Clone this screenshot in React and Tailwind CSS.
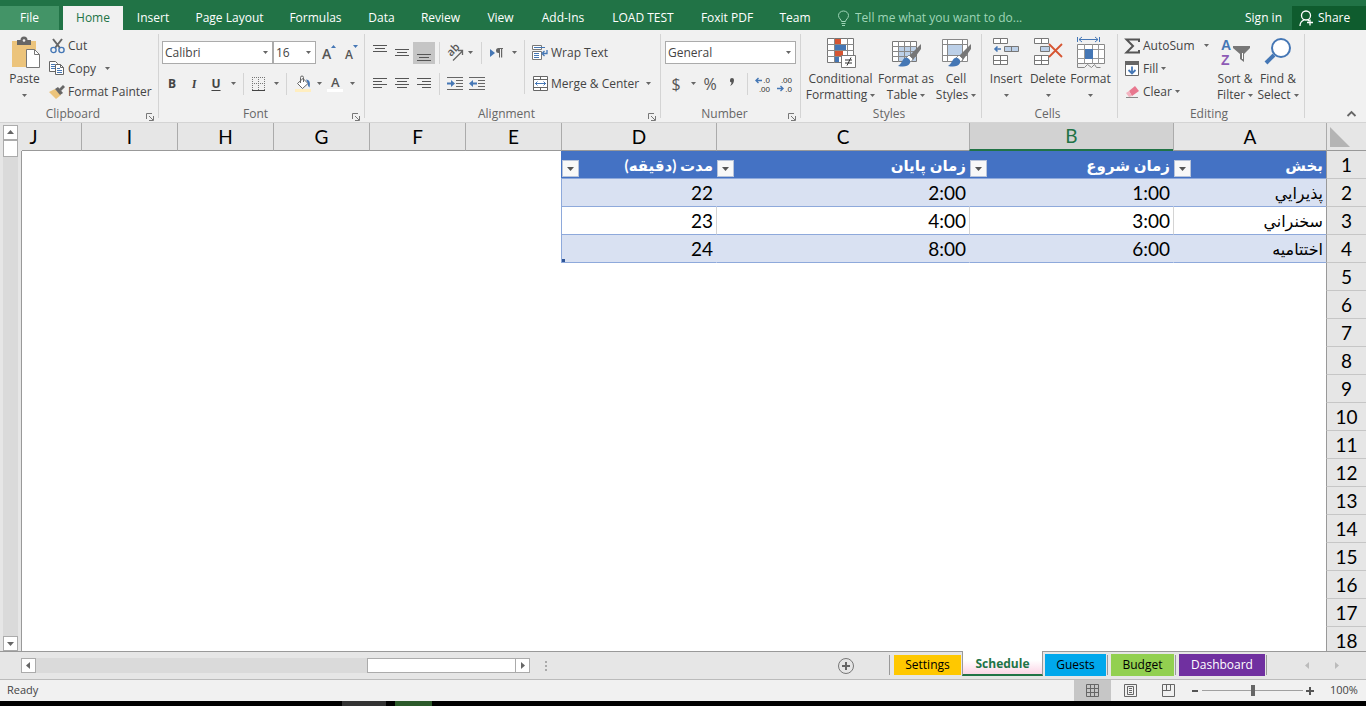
import React from 'react';
import clsx from 'clsx';

const ribbonTabs = [
  { name: 'Home', width: 'w-[60px]' },
  { name: 'Insert', width: 'w-[60px]' },
  { name: 'Page Layout', width: 'w-[93px]' },
  { name: 'Formulas', width: 'w-[79px]' },
  { name: 'Data', width: 'w-[53px]' },
  { name: 'Review', width: 'w-[65px]' },
  { name: 'View', width: 'w-[55px]' },
  { name: 'Add-Ins', width: 'w-[70px]' },
  { name: 'LOAD TEST', width: 'w-[90px]' },
  { name: 'Foxit PDF', width: 'w-[78px]' },
  { name: 'Team', width: 'w-[58px]' },
];

const columns = [
  { name: 'A', width: 'w-[153px]' },
  { name: 'B', width: 'w-[204px]' },
  { name: 'C', width: 'w-[253px]' },
  { name: 'D', width: 'w-[155px]' },
  { name: 'E', width: 'w-[96px]' },
  { name: 'F', width: 'w-[96px]' },
  { name: 'G', width: 'w-[96px]' },
  { name: 'H', width: 'w-[96px]' },
  { name: 'I', width: 'w-[96px]' },
  { name: 'J', width: 'w-[96px]' },
];

const headings = ['بخش', 'زمان شروع', 'زمان پایان', 'مدت (دقیقه)'];

const schedule = [
  ['پذيرايي', '1:00', '2:00', '22'],
  ['سخنراني', '3:00', '4:00', '23'],
  ['اختتاميه', '6:00', '8:00', '24'],
];

const emptyRows = [5, 6, 7, 8, 9, 10, 11, 12, 13, 14, 15, 16, 17, 18];

// Small drop-down arrow
const Arrow = ({ className }) => (
  <svg viewBox="0 0 5 3" className={clsx('h-[3px] w-[5px] shrink-0', className)} aria-hidden="true">
    <path d="M0 0h5L2.5 3z" fill="#666" />
  </svg>
);

const Icon = ({ w = 16, h = 16, className, children }) => (
  <svg
    width={w}
    height={h}
    viewBox={`0 0 ${w} ${h}`}
    fill="none"
    className={clsx('shrink-0 overflow-visible', className)}
    aria-hidden="true"
  >
    {children}
  </svg>
);

const Separator = ({ className }) => (
  <span className={clsx('h-[22px] w-px shrink-0 bg-[#d4d4d4]', className)} />
);

const DropButton = ({ label, className }) => (
  <button aria-label={label} className={clsx('flex h-[22px] items-center justify-center', className)}>
    <Arrow />
  </button>
);

const ToolButton = ({ label, active, className, children }) => (
  <button
    aria-label={label}
    className={clsx(
      'flex h-[22px] w-[22px] shrink-0 items-center justify-center',
      active && 'bg-[#c5c5c5]',
      className
    )}
  >
    {children}
  </button>
);

const Group = ({ label, launcher, className, children }) => (
  <section className={clsx('flex shrink-0 pt-1', className)}>
    <div className="flex min-w-0 flex-1 flex-col">
      <div className="flex h-[72px]">{children}</div>
      <div className="flex h-4 items-end pr-1">
        <span className="flex-1 text-center leading-4 text-[#666]">{label}</span>
        {launcher && (
          <button aria-label={`${label} settings`} className="pb-px">
            <Icon w={8} h={8}>
              <path d="M.5 6V.5H6M3 3l4 4M7.5 3v4.5H3" stroke="#777" />
            </Icon>
          </button>
        )}
      </div>
    </div>
    <span className="h-[84px] w-px bg-[#d4d4d4]" />
  </section>
);

const BigButton = ({ icon, first, second, arrow, className }) => (
  <button className={clsx('flex shrink-0 flex-col items-center pt-1 leading-4', className)}>
    <span className="mb-[3px] flex h-[30px] items-center">{icon}</span>
    <span className="whitespace-nowrap">{first}</span>
    <span className="flex h-4 items-center gap-[3px] whitespace-nowrap">
      {second}
      {arrow && <Arrow />}
    </span>
  </button>
);

const SmallButton = ({ icon, text, arrow, className }) => (
  <button className={clsx('flex h-[23px] items-center whitespace-nowrap', className)}>
    <span className="mr-[3px] flex w-4 justify-center">{icon}</span>
    {text}
    {arrow && <Arrow className={arrow} />}
  </button>
);

const SelectBox = ({ label, value, className }) => (
  <span className={clsx('relative flex h-[23px]', className)}>
    <select
      aria-label={label}
      className="w-full appearance-none border border-[#ababab] bg-white pl-[2px] text-[#444] outline-none"
    >
      <option>{value}</option>
    </select>
    <Arrow className="pointer-events-none absolute top-[10px] right-[5px]" />
  </span>
);

const PasteIcon = () => (
  <Icon w={30} h={31} className="ml-[3px]">
    <path d="M1 3h24v26H1z" fill="#ecc47c" />
    <path d="M6 2h3.5a3.5 3.5 0 0 1 7 0H20v5H6z" fill="#666" />
    <circle cx="13" cy="2.500" r="1.300" fill="#f1f1f1" />
    <path d="M15.500 11.500h8l5 5v13h-13z" fill="#fff" stroke="#777" />
    <path d="M23.500 11.500v5h5" stroke="#777" />
  </Icon>
);

const CutIcon = () => (
  <Icon w={15} h={16}>
    <path d="m3 1 7 9M12 1 5 10" stroke="#666" strokeWidth="2" />
    <circle cx="3.500" cy="12" r="2.600" stroke="#4577b5" strokeWidth="1.400" />
    <circle cx="11.500" cy="12" r="2.600" stroke="#4577b5" strokeWidth="1.400" />
  </Icon>
);

const CopyIcon = () => (
  <Icon w={16} h={15}>
    <path d="M.5.500h6l2 2v8h-8z" fill="#fff" stroke="#666" />
    <path d="M2 3.500h4M2 5.500h4M2 7.500h4" stroke="#4577b5" />
    <path d="M6.500 3.500h5l3 3v7h-8z" fill="#fff" stroke="#666" />
    <path d="M11.500 3.500v3h3" stroke="#666" />
    <path d="M8 7.500h3M8 9.500h5M8 11.500h5" stroke="#4577b5" />
  </Icon>
);

const PainterIcon = () => (
  <Icon>
    <path d="m0 8 6-3 6 6-5 4z" fill="#ecc47c" />
    <path d="m6 5 3-2 5 6-3 2z" fill="#666" />
    <path d="m10 5 4-4 2 2-4 4z" fill="#666" />
  </Icon>
);

const BordersIcon = () => (
  <Icon w={14} h={14}>
    <path d="M0 .5h13M0 6.500h13M.5 0v13M6.500 0v13M12.500 0v13" stroke="#777" strokeDasharray="1 1" />
    <path d="M0 13.500h13" stroke="#444" />
  </Icon>
);

const FillColorIcon = () => (
  <Icon w={17} h={18}>
    <path d="m2.500 8.500 5.500-5 5 5-5.500 5z" fill="#fff" stroke="#666" />
    <path d="M5.500 8V2.500a1.500 1.500 0 0 1 3 0V7" stroke="#666" />
    <path d="M11 4.500c4 0 4.500 4 3.500 8-1-1-2-2-1.500-4z" fill="#4577b5" />
    <path d="M0 14h16v3H0z" fill="#ffeec0" />
  </Icon>
);

const lineSets = {
  top: 'M0 .5h14M2 3.500h10M0 6.500h14',
  middle: 'M0 4.500h14M2 7.500h10M0 10.500h14',
  bottom: 'M0 9.500h14M2 12.500h10M0 15.500h14',
  left: 'M0 2.500h14M0 5.500h9M0 8.500h14M0 11.500h9',
  center: 'M0 2.500h14M2 5.500h10M0 8.500h14M2 11.500h10',
  right: 'M0 2.500h14M5 5.500h9M0 8.500h14M5 11.500h9',
};

const LinesIcon = ({ kind }) => (
  <Icon w={14}>
    <path d={lineSets[kind]} stroke="#555" />
  </Icon>
);

const IndentIcon = ({ flip }) => (
  <Icon w={16} h={14}>
    <path d="M0 .5h16M9 3.500h7M9 6.500h7M9 9.500h7M0 12.500h16" stroke="#666" />
    {flip ? (
      <path d="M0 6.500 4 3v2.500h4v2H4V10z" fill="#4577b5" />
    ) : (
      <path d="M8 6.500 4 3v2.500H0v2h4V10z" fill="#4577b5" />
    )}
  </Icon>
);

const OrientationIcon = () => (
  <Icon w={17}>
    <text transform="translate(4 12) rotate(-45)" fontSize="11" fontWeight="600" fill="#555">
      ab
    </text>
    <path d="m6 15.500 9-9M15.500 10V5.500H11" stroke="#666" strokeWidth="1.300" />
  </Icon>
);

const DirectionIcon = () => (
  <Icon w={14} h={12}>
    <path d="m0 2 5 4-5 4z" fill="#4577b5" />
    <path d="M9 6H8.500a2.500 2.500 0 0 1 0-5H13v1h-.800v8.500H11V2h-1v8.500H9z" fill="#666" />
  </Icon>
);

const WrapIcon = () => (
  <Icon>
    <path d="M.5.500h9v4h-9zM.500 6.500h9v8h-9z" fill="#fff" stroke="#777" />
    <path d="M2 2.500h11M2 8.500h5M2 10.500h5M2 12.500h5" stroke="#4577b5" />
    <path d="M15 5v3.500h-4M12.500 6l-2.500 2.500 2.500 2.500" stroke="#4577b5" strokeWidth="1.300" />
  </Icon>
);

const MergeIcon = () => (
  <Icon w={15} h={15}>
    <path d="M.5.500h14v14H.500zM.500 3.500h14M.500 11.500h14M7.500.500v3M7.500 11.500v3" fill="#fff" stroke="#666" />
    <path d="M2 7.500h11M4.500 5.500l-2 2 2 2M10.500 5.500l2 2-2 2" stroke="#4577b5" />
  </Icon>
);

// Number format icons: arrow beside stacked digits
const DecimalIcon = ({ increase }) => (
  <Icon w={16} h={16} className="font-['Liberation_Sans',sans-serif]">
    <text x="15" y="7" textAnchor="end" fontSize="8" fill="#333">
      {increase ? '.0' : '.00'}
    </text>
    <text x="15" y="16" textAnchor="end" fontSize="8" fill="#333">
      {increase ? '.00' : '.0'}
    </text>
    {increase ? (
      <path d="M7 4.500H1M3.500 2 1 4.500 3.500 7" stroke="#4577b5" strokeWidth="1.400" />
    ) : (
      <path d="M0 12.500h6M3.500 10 6 12.500 3.500 15" stroke="#4577b5" strokeWidth="1.400" />
    )}
  </Icon>
);

const Brush = () => (
  <>
    <path d="M30 6v5l-8 11-4-4z" fill="#777" />
    <path d="m18 17 4 4-2 3-5-4z" fill="#fff" stroke="#777" strokeWidth=".8" />
    <path d="M14 20c3-1 6 2 5 5-2 4-7 4-12 3 4-2 4-7 7-8z" fill="#4577b5" />
  </>
);

const ConditionalIcon = () => (
  <Icon w={30} h={30} className="ml-px">
    <path d="M1.500.500h26v24h-26z" fill="#fff" stroke="#777" />
    <path d="M1 6.500h27M1 12.500h27M1 18.500h27M8.500 0v25M21.500 0v25" stroke="#888" />
    <path d="M9 1h6v5H9zM9 13h8v5H9z" fill="#d65532" />
    <path d="M9 7h11v5H9zM9 19h4v5H9z" fill="#4577b5" />
    <path d="M15.500 17.500h14v12h-14z" fill="#fff" stroke="#777" />
    <path d="M19 22h7M19 25h7M25 19.500l-4 8" stroke="#333" />
  </Icon>
);

const FormatTableIcon = () => (
  <Icon w={31} h={30}>
    <path d="M1.500 3.500h24v20h-24z" fill="#fff" stroke="#777" />
    <path d="M8 8h17v15H8z" fill="#bcd0e8" />
    <path d="M1 8.500h25M1 13.500h25M1 18.500h25M7.500 3v21M13.500 3v21M19.500 3v21" stroke="#888" />
    <Brush />
  </Icon>
);

const CellStylesIcon = () => (
  <Icon w={31} h={30}>
    <path d="M1.500 1.500h25v22h-25zM6.500 1v23M21.500 1v23M1 6.500h26M1 17.500h26" fill="#fff" stroke="#888" />
    <path d="M7 7h14v10H7z" fill="#bcd0e8" />
    <Brush />
  </Icon>
);

const InsertIcon = () => (
  <Icon w={28} h={30}>
    <path d="M1.500.500h14v5h-14zM8.500.500v5M1.500 17.500h14v9h-14zM8.500 17.500v9M1.500 22.500h14" fill="#fff" stroke="#777" />
    <path d="M12.500 8.500h14v5h-14zM19.500 8.500v5" fill="#bcd0e8" stroke="#777" />
    <path d="M9 11H3M5.500 8.500 3 11l2.500 2.500" stroke="#4577b5" strokeWidth="1.600" />
  </Icon>
);

const DeleteIcon = () => (
  <Icon w={30} h={30}>
    <path d="M1.500.500h14v5h-14zM8.500.500v5M1.500 17.500h14v9h-14zM8.500 17.500v9M1.500 22.500h14" fill="#fff" stroke="#777" />
    <path d="M7.500 8.500h9v5h-9z" fill="#bcd0e8" stroke="#777" />
    <path d="m16 6 13 13M29 6 16 19" stroke="#d65532" strokeWidth="1.800" />
  </Icon>
);

const FormatIcon = () => (
  <Icon w={30} h={32}>
    <path d="M1.500 0v5M23.500 0v5M3 2.500h19M6 0 3 2.500 6 5M19 0l3 2.500L19 5" stroke="#4577b5" />
    <path d="M1.500 7.500h27v19h-27z" fill="#fff" stroke="#888" />
    <path d="M8.500 7v20M16.500 7v20M22.500 7v20M1 12.500h28M1 21.500h28" stroke="#999" />
    <path d="M9 12h8v10H9z" fill="#4577b5" />
    <path d="M1.500 26.500v4h7l3-3 4 3 3-3 2 3h4" stroke="#888" />
  </Icon>
);

const SumIcon = () => (
  <Icon w={16} h={16}>
    <path d="M15 4V1.500H2.500L9 8l-6.500 6.500H15V12" stroke="#555" strokeWidth="2" />
  </Icon>
);

const FillIcon = () => (
  <Icon w={14} h={15}>
    <path d="M.5.500h13v14H.500z" fill="#fff" stroke="#666" />
    <path d="M0 0h14v4H0z" fill="#666" />
    <path d="M7 5.500v7M3.500 9 7 12.500 10.500 9" stroke="#4577b5" strokeWidth="1.800" />
  </Icon>
);

const ClearIcon = () => (
  <Icon w={15} h={14}>
    <path d="m4 6 6-5 4 5-7 5z" fill="#e8788f" />
    <path d="m1 8 3-2 3 5-3 1z" fill="#f3b3c0" />
    <path d="M1 12.500h12" stroke="#888" />
  </Icon>
);

const SortIcon = () => (
  <Icon w={30} h={30} className="font-['Liberation_Sans',sans-serif]">
    <text x="1" y="12" fontSize="14" fontWeight="700" fill="#4577b5">A</text>
    <text x="1" y="27" fontSize="14" fontWeight="700" fill="#8e5bb5">Z</text>
    <path d="M13 8h17v2l-6 6v8l-4-3v-5l-7-6z" fill="#777" />
    <path d="M22.500 15v6" stroke="#fff" />
  </Icon>
);

const FindIcon = () => (
  <Icon w={28} h={30}>
    <circle cx="17" cy="10" r="9" fill="#fff" stroke="#4577b5" strokeWidth="2" />
    <path d="m10 17-8 8" stroke="#4577b5" strokeWidth="4" />
  </Icon>
);

const TitleBar = () => (
  <header className="flex h-[30px] shrink-0 items-end bg-[#217346] text-white">
    <button className="mr-1 h-6 w-[59px] bg-[#439467]">File</button>
    {ribbonTabs.map((tab) => (
      <button
        key={tab.name}
        className={clsx(
          'h-6 shrink-0 whitespace-nowrap',
          tab.width,
          tab.name === 'Home' && 'bg-[#f1f1f1] text-[#217346]'
        )}
      >
        {tab.name}
      </button>
    ))}
    <label className="ml-[14px] flex h-6 flex-1 items-center gap-[6px]">
      <Icon w={11} h={15}>
        <path d="M3.500 10.500c0-2-3-3-3-6a5 4.500 0 0 1 10 0c0 3-3 4-3 6zM3.500 12.500h4M4 14.500h3" stroke="#9fd5b7" />
      </Icon>
      <input
        aria-label="Tell me what you want to do"
        placeholder="Tell me what you want to do..."
        className="w-full bg-transparent outline-none placeholder:text-[#9fd5b7]"
      />
    </label>
    <button className="mr-[10px] h-6 whitespace-nowrap">Sign in</button>
    <button className="flex h-6 w-[74px] items-center gap-1 bg-[#0f5c2e] pl-[7px]">
      <Icon w={15} h={16}>
        <circle cx="7" cy="5.500" r="4.500" stroke="#fff" strokeWidth="1.300" />
        <path d="M1 16c0-3 1.500-5 4-6M9 10l1 1M11 9.500v6M8 12.500h6" stroke="#fff" strokeWidth="1.300" />
      </Icon>
      Share
    </button>
  </header>
);

const Ribbon = () => (
  <div className="flex h-[92px] shrink-0 bg-[#f1f1f1]">
    <Group label="Clipboard" launcher className="w-[159px]">
      <BigButton icon={<PasteIcon />} first="Paste" arrow className="w-[49px]" />
      <div className="flex flex-col">
        <SmallButton icon={<CutIcon />} text="Cut" />
        <SmallButton icon={<CopyIcon />} text="Copy" arrow="ml-[9px]" />
        <SmallButton icon={<PainterIcon />} text="Format Painter" />
      </div>
    </Group>

    <Group label="Font" launcher className="w-[206px]">
      <div className="flex flex-col pt-[3px]">
        <div className="flex h-[31px] items-center pl-[3px]">
          <SelectBox label="Font" value="Calibri" className="w-[111px]" />
          <SelectBox label="Font size" value="16" className="w-[43px]" />
          <ToolButton label="Increase font size" className="ml-[2px]">
            <Icon>
              <text x="1" y="14" fontSize="14" fontWeight="600" fill="#555">A</text>
              <path d="M10 3h5l-2.500-3z" fill="#4577b5" />
            </Icon>
          </ToolButton>
          <ToolButton label="Decrease font size">
            <Icon>
              <text x="2" y="14" fontSize="12" fontWeight="600" fill="#555">A</text>
              <path d="M10 0h5l-2.500 3z" fill="#4577b5" />
            </Icon>
          </ToolButton>
        </div>
        <div className="flex h-[31px] items-center pl-[2px]">
          <ToolButton label="Bold" className="font-bold">B</ToolButton>
          <ToolButton label="Italic" className="font-serif font-bold italic">I</ToolButton>
          <ToolButton label="Underline" className="font-bold underline underline-offset-2">U</ToolButton>
          <DropButton label="Underline style" className="w-3" />
          <Separator className="ml-1" />
          <ToolButton label="Borders" className="ml-1"><BordersIcon /></ToolButton>
          <DropButton label="Border style" className="w-3" />
          <Separator className="ml-1" />
          <ToolButton label="Fill color" className="ml-[5px]"><FillColorIcon /></ToolButton>
          <DropButton label="Fill palette" className="w-[10px]" />
          <ToolButton label="Font color">
            <Icon w={16} h={17}>
              <text x="4" y="12" fontSize="13" fontWeight="600" fill="#555">A</text>
              <path d="M0 14h16v3H0z" fill="#fff" />
            </Icon>
          </ToolButton>
          <DropButton label="Font palette" className="w-3" />
        </div>
      </div>
    </Group>

    <Group label="Alignment" launcher className="w-[296px]">
      <div className="flex flex-col pt-[3px] pl-1">
        <div className="flex h-[31px] items-center">
          <ToolButton label="Top align"><LinesIcon kind="top" /></ToolButton>
          <ToolButton label="Middle align"><LinesIcon kind="middle" /></ToolButton>
          <ToolButton label="Bottom align" active><LinesIcon kind="bottom" /></ToolButton>
          <Separator className="ml-1" />
          <ToolButton label="Orientation" className="ml-1"><OrientationIcon /></ToolButton>
          <DropButton label="Orientation options" className="w-2" />
          <Separator className="ml-[7px]" />
          <ToolButton label="Text direction" className="ml-1"><DirectionIcon /></ToolButton>
          <DropButton label="Direction options" className="w-3" />
        </div>
        <div className="flex h-[31px] items-center">
          <ToolButton label="Align left"><LinesIcon kind="left" /></ToolButton>
          <ToolButton label="Center"><LinesIcon kind="center" /></ToolButton>
          <ToolButton label="Align right"><LinesIcon kind="right" /></ToolButton>
          <Separator className="ml-1" />
          <ToolButton label="Increase indent" className="ml-1"><IndentIcon /></ToolButton>
          <ToolButton label="Decrease indent"><IndentIcon flip /></ToolButton>
        </div>
      </div>
      <span className="mt-[6px] ml-1 h-[54px] w-px bg-[#d4d4d4]" />
      <div className="flex flex-col pt-[3px] pl-[7px]">
        <div className="flex h-[31px] items-center">
          <SmallButton icon={<WrapIcon />} text="Wrap Text" />
        </div>
        <div className="flex h-[31px] items-center">
          <SmallButton icon={<MergeIcon />} text="Merge & Center" arrow="ml-[7px]" />
        </div>
      </div>
    </Group>

    <Group label="Number" launcher className="w-[140px]">
      <div className="flex flex-1 flex-col pt-[3px] pl-1">
        <div className="flex h-[31px] items-center">
          <SelectBox label="Number format" value="General" className="w-[131px]" />
        </div>
        <div className="flex h-[31px] items-center text-[#555]">
          <ToolButton label="Currency" className="text-base">$</ToolButton>
          <DropButton label="Currency options" className="w-3" />
          <ToolButton label="Percent" className="text-base">%</ToolButton>
          <ToolButton label="Comma style">
            <Icon w={6} h={12}>
              <path d="M1 2a2 2 0 0 1 4 0c0 3-1.500 5-4 6 1-1.500 1.500-2.500 1.500-3.500A2 2 0 0 1 1 2z" fill="#555" />
            </Icon>
          </ToolButton>
          <Separator className="ml-1" />
          <ToolButton label="Increase decimal" className="ml-1"><DecimalIcon increase /></ToolButton>
          <ToolButton label="Decrease decimal"><DecimalIcon /></ToolButton>
        </div>
      </div>
    </Group>

    <Group label="Styles" className="w-[181px]">
      <BigButton icon={<ConditionalIcon />} first="Conditional" second="Formatting" arrow className="w-[79px]" />
      <BigButton icon={<FormatTableIcon />} first="Format as" second="Table" arrow className="w-[52px]" />
      <BigButton icon={<CellStylesIcon />} first="Cell" second="Styles" arrow className="w-[48px]" />
    </Group>

    <Group label="Cells" className="w-[136px]">
      <BigButton icon={<InsertIcon />} first="Insert" arrow className="ml-[3px] w-[42px]" />
      <BigButton icon={<DeleteIcon />} first="Delete" arrow className="w-[42px]" />
      <BigButton icon={<FormatIcon />} first="Format" arrow className="w-[43px]" />
    </Group>

    <Group label="Editing" className="w-[187px]">
      <div className="flex w-[96px] flex-col pl-[6px]">
        <SmallButton icon={<SumIcon />} text="AutoSum" arrow="ml-[9px]" />
        <SmallButton icon={<FillIcon />} text="Fill" arrow="ml-[3px]" />
        <SmallButton icon={<ClearIcon />} text="Clear" arrow="ml-[3px]" />
      </div>
      <BigButton icon={<SortIcon />} first="Sort &" second="Filter" arrow className="w-[42px]" />
      <BigButton icon={<FindIcon />} first="Find &" second="Select" arrow className="w-[44px]" />
    </Group>

    <button aria-label="Collapse the ribbon" className="mr-[10px] mb-[5px] ml-auto self-end">
      <Icon w={9} h={6}>
        <path d="m.5 5 4-4 4 4" stroke="#666" strokeWidth="1.800" />
      </Icon>
    </button>
  </div>
);

const ScrollButton = ({ label, path, className }) => (
  <button
    aria-label={label}
    className={clsx('flex h-[15px] w-[15px] shrink-0 items-center justify-center border border-[#ababab] bg-white', className)}
  >
    <Icon w={7} h={7}>
      <path d={path} fill="#666" />
    </Icon>
  </button>
);

const FilterButton = ({ label }) => (
  <button
    aria-label={`Filter ${label}`}
    className="mb-px flex h-[17px] w-[17px] items-center justify-center border border-[#b8c4da] bg-[#f8f8f8]"
  >
    <svg viewBox="0 0 7 4" className="h-1 w-[7px]" aria-hidden="true">
      <path d="M0 0h7L3.500 4z" fill="#555" />
    </svg>
  </button>
);

const RowHeader = ({ number }) => (
  <th
    scope="row"
    className="h-7 border-b border-l border-b-[#c6c6c6] border-l-[#999] bg-[#e6e6e6] p-0 text-center font-normal"
  >
    {number}
  </th>
);

const Sheet = () => (
  <main className="flex min-h-0 flex-1 overflow-hidden border-t border-[#d4d4d4] bg-[#e6e6e6]">
    <div className="flex w-[21px] shrink-0 flex-col pt-[2px] pl-[3px]">
      <ScrollButton label="Scroll up" path="M0 5h7L3.500 1z" />
      <div className="flex w-[15px] flex-1 flex-col bg-[#dadada]">
        <div className="h-[17px] border border-[#ababab] bg-white" />
      </div>
      <ScrollButton label="Scroll down" path="M0 2h7L3.500 6z" />
    </div>
    <span className="mt-7 w-px shrink-0 bg-[#999]" />
    <div dir="rtl" className="min-w-0 flex-1 overflow-hidden">
      <table className="w-[1381px] table-fixed border-separate border-spacing-0 bg-white font-['Lato','DejaVu_Sans',sans-serif] text-[19px] leading-[26px] text-black">
        <thead>
          <tr>
            <th className="h-7 w-10 border-b border-l border-b-[#999] border-l-[#ababab] bg-[#e6e6e6] p-0">
              <svg width="20" height="20" className="mr-4" aria-label="Select all">
                <path d="M0 0v20h20z" fill="#b4b4b4" />
              </svg>
            </th>
            {columns.map((col) => (
              <th
                key={col.name}
                scope="col"
                className={clsx(
                  'h-7 border-l border-l-[#ababab] p-0 text-center font-normal',
                  col.width,
                  col.name === 'B'
                    ? 'border-b-2 border-b-[#217346] bg-[#d2d2d2] text-[#217346]'
                    : 'border-b border-b-[#999] bg-[#e6e6e6]'
                )}
              >
                {col.name}
              </th>
            ))}
          </tr>
        </thead>
        <tbody>
          <tr>
            <RowHeader number={1} />
            {headings.map((heading) => (
              <td key={heading} className="h-7 border-b border-[#8ea9db] bg-[#4472c4] p-0 text-white">
                <div className="flex h-[27px] items-end justify-between pr-[3px] pl-px">
                  <span className="text-[15px] font-bold whitespace-nowrap">{heading}</span>
                  <FilterButton label={heading} />
                </div>
              </td>
            ))}
            <td colSpan={6} />
          </tr>
          {schedule.map((row, i) => (
            <tr key={row[0]}>
              <RowHeader number={i + 2} />
              {row.map((value, j) => (
                <td
                  key={j}
                  className={clsx(
                    'relative h-7 border-b border-l border-b-[#8ea9db] p-0 pr-[3px] text-right',
                    i === 1 ? 'bg-white' : 'bg-[#d9e1f2]',
                    j === 3 ? 'border-l-[#8ea9db]' : i === 1 ? 'border-l-[#d4d4d4]' : 'border-l-[#d9e1f2]',
                    j === 0 && 'text-base'
                  )}
                >
                  {value}
                  {/* table resize handle */}
                  {i === 2 && j === 3 && <span className="absolute bottom-0 left-0 size-[3px] bg-[#2f5597]" />}
                </td>
              ))}
              <td colSpan={6} />
            </tr>
          ))}
          {emptyRows.map((number) => (
            <tr key={number}>
              <RowHeader number={number} />
              <td colSpan={10} />
            </tr>
          ))}
        </tbody>
      </table>
    </div>
  </main>
);

const SheetBar = () => (
  <nav className="flex h-[28px] shrink-0 items-center border-t border-[#999] bg-[#e6e6e6] pl-[21px] text-black">
    <ScrollButton label="Scroll left" path="M5 0v7L1 3.500z" />
    <div className="flex h-[15px] w-[480px] justify-end bg-[#dadada]">
      <div className="w-[149px] border border-[#ababab] bg-white" />
    </div>
    <ScrollButton label="Scroll right" path="M2 0v7l4-3.500z" className="-ml-px" />
    <Icon w={2} h={10} className="ml-[15px]">
      <path d="M0 0h2v2H0zM0 4h2v2H0zM0 8h2v2H0z" fill="#aaa" />
    </Icon>
    <button aria-label="New sheet" className="mr-[35px] ml-auto">
      <Icon>
        <circle cx="8" cy="8" r="7.500" stroke="#777" />
        <path d="M8 4v8M4 8h8" stroke="#666" strokeWidth="2" />
      </Icon>
    </button>
    <div className="flex h-full items-start">
      <span className="mt-[3px] mr-[3px] h-5 w-px bg-[#999]" />
      <button className="mt-[2px] h-[22px] w-[69px] border border-[#e6e6e6] bg-[#ffc800]">Settings</button>
      <button className="-mt-px h-[25px] w-[81px] border-x border-b-2 border-x-[#999] border-b-[#217346] bg-linear-to-b from-white from-40% to-[#fbd5e6] pt-[3px] font-bold text-[#217346]">
        Schedule
      </button>
      <button className="mt-[2px] ml-[2px] h-[22px] w-[61px] bg-[#00a8ec]">Guests</button>
      <span className="mt-[3px] mr-[3px] ml-px h-5 w-px bg-[#999]" />
      <button className="mt-[2px] h-[22px] w-[63px] bg-[#92d050]">Budget</button>
      <span className="mt-[3px] mr-[3px] ml-px h-5 w-px bg-[#999]" />
      <button className="mt-[2px] h-[22px] w-[86px] bg-[#7030a0] text-white">Dashboard</button>
      <span className="mt-[3px] ml-px h-5 w-px bg-[#999]" />
    </div>
    <button aria-label="Previous sheets" className="ml-[38px]">
      <Icon w={5} h={7}>
        <path d="M4 0v7L0 3.500z" fill="#bbb" />
      </Icon>
    </button>
    <button aria-label="Next sheets" className="mr-[27px] ml-6">
      <Icon w={5} h={7}>
        <path d="M1 0v7l4-3.500z" fill="#bbb" />
      </Icon>
    </button>
  </nav>
);

const StatusBar = () => (
  <footer className="flex h-[22px] shrink-0 items-center border-t border-[#bbb] bg-[#f1f1f1] pl-[7px] text-[11px] text-[#444]">
    <span className="flex-1">Ready</span>
    <button aria-label="Normal view" className="flex h-full w-[37px] items-center justify-center bg-[#c6c6c6]">
      <Icon w={13} h={13}>
        <path d="M.5.500h12v12H.500zM.500 4.500h12M.500 8.500h12M4.500.500v12M8.500.500v12" stroke="#666" />
      </Icon>
    </button>
    <button aria-label="Page layout view" className="flex h-full w-[39px] items-center justify-center">
      <Icon w={13} h={13}>
        <path d="M.5.500h12v12H.500zM3.500 2.500h6v8h-6zM5 4.500h3M5 6.500h3M5 8.500h3" stroke="#666" />
      </Icon>
    </button>
    <button aria-label="Page break preview" className="flex h-full w-[37px] items-center justify-center">
      <Icon w={13} h={13}>
        <path d="M.5.500h12v12H.500zM4.500.500v6M8.500.500v6M.500 6.500h8" stroke="#666" />
      </Icon>
    </button>
    <button aria-label="Zoom out" className="ml-1">
      <Icon w={8} h={8}>
        <path d="M1 4h6" stroke="#555" strokeWidth="2" />
      </Icon>
    </button>
    <input
      type="range"
      aria-label="Zoom"
      defaultValue={50}
      className="mx-[3px] h-[11px] w-[101px] appearance-none bg-[linear-gradient(#a0a0a0,#a0a0a0)] bg-[length:100%_1px] bg-center bg-no-repeat [&::-webkit-slider-thumb]:h-[11px] [&::-webkit-slider-thumb]:w-1 [&::-webkit-slider-thumb]:appearance-none [&::-webkit-slider-thumb]:bg-[#666]"
    />
    <button aria-label="Zoom in">
      <Icon w={8} h={8}>
        <path d="M0 4h8M4 0v8" stroke="#555" strokeWidth="2" />
      </Icon>
    </button>
    <span className="ml-4 w-9">100%</span>
  </footer>
);

const App = () => {
  return (
    <div className="flex h-screen flex-col overflow-hidden bg-[#f1f1f1] font-['Open_Sans','Noto_Sans',sans-serif] text-xs text-[#444]">
      <TitleBar />
      <Ribbon />
      <Sheet />
      <SheetBar />
      <StatusBar />
      <div className="flex h-[5px] shrink-0 bg-black pl-[342px]">
        <span className="w-11 bg-[#333]" />
        <span className="ml-[9px] w-[37px] bg-[#2c5a2a]" />
      </div>
    </div>
  );
};

export default App;
